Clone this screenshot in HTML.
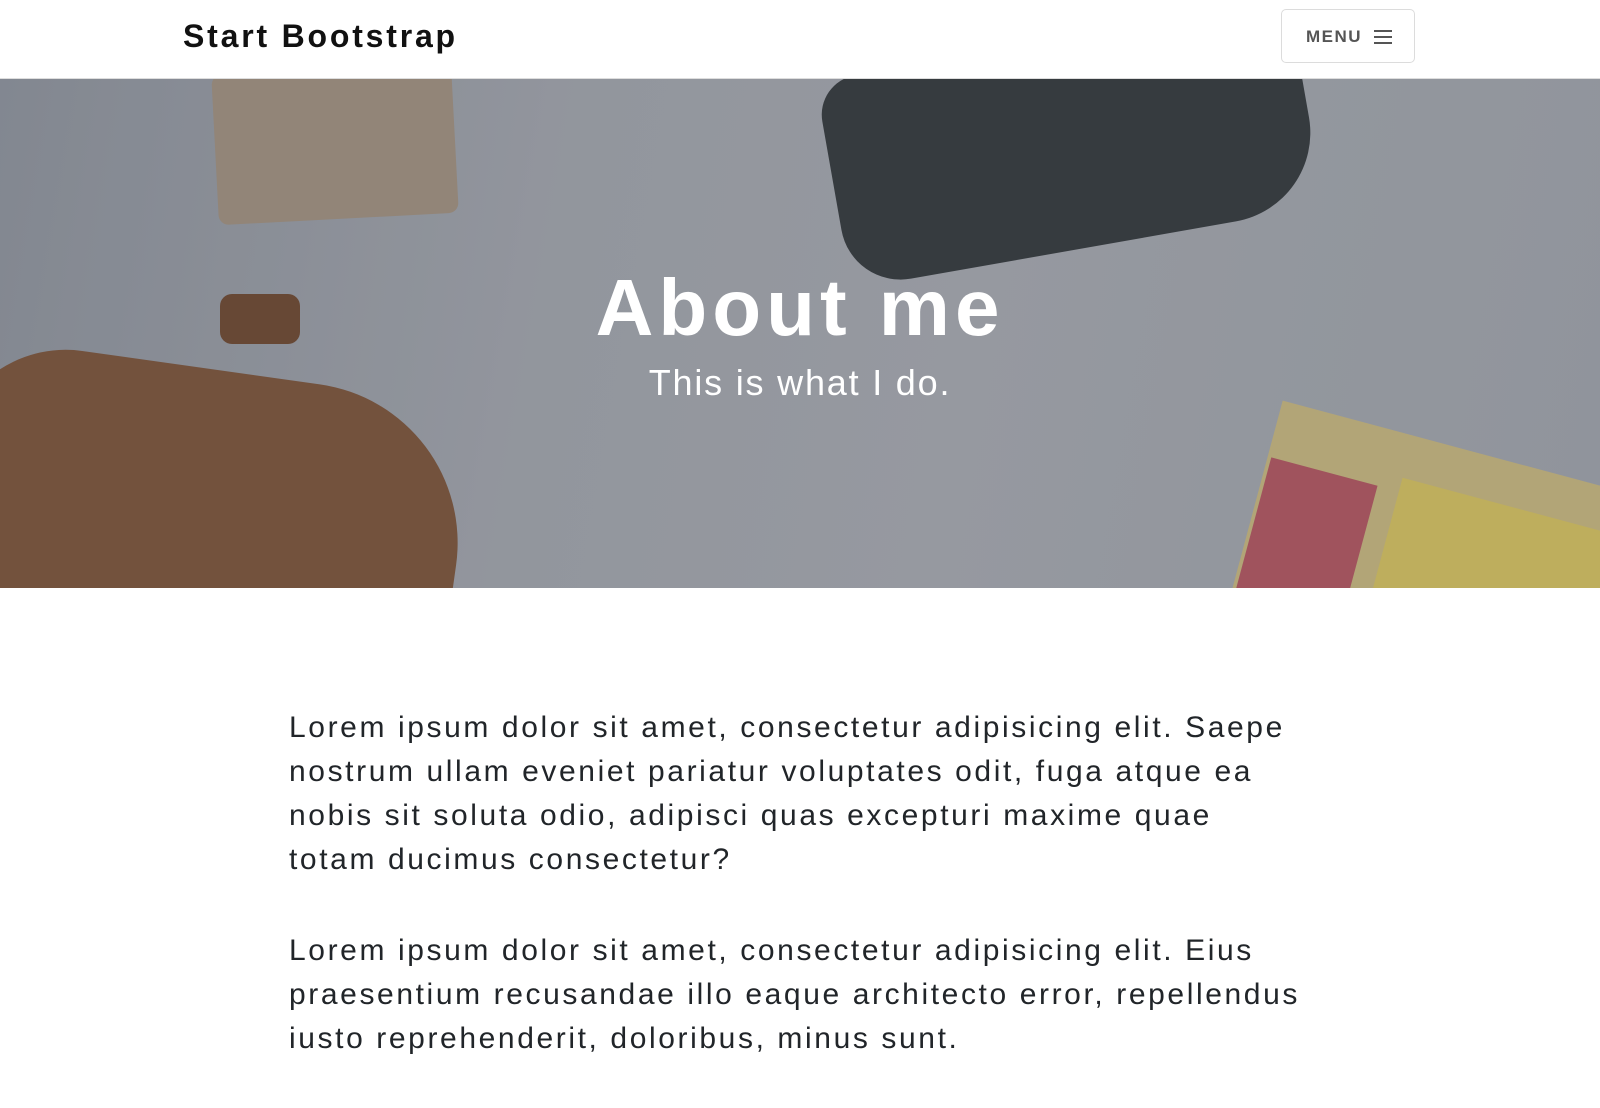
<!DOCTYPE html>
<html><head><meta charset="utf-8"><style>
*{margin:0;padding:0;box-sizing:border-box}
body{width:1600px;height:1000px;overflow:hidden;background:#fff;font-family:"Liberation Sans",sans-serif;color:#212529}
nav{position:absolute;top:0;left:0;width:1600px;height:79px;background:#fff;border-bottom:1px solid #ddd}
.brand{position:absolute;left:183px;top:18px;font-weight:bold;font-size:32px;letter-spacing:2.8px;color:#111}
.menu{position:absolute;left:1281px;top:9px;width:134px;height:54px;border:1px solid #dcdcdc;border-radius:5px;font-weight:bold;font-size:17px;letter-spacing:1.5px;color:#555;padding:17px 0 0 24px}
.menu i{position:absolute;left:92px;top:20px;width:18px;height:2px;background:#555;box-shadow:0 6px 0 #555,0 12px 0 #555}
.hero{position:absolute;top:79px;left:0;width:1600px;height:509px;overflow:hidden;
background:linear-gradient(100deg,#8d929b 0%,#a1a4ab 35%,#a5a8ae 60%,#9ea2a9 100%)}
.hero .s{position:absolute}
h1{position:absolute;top:262px;left:0;width:1600px;text-align:center;font-size:80px;font-weight:bold;color:#fff;letter-spacing:5px}
.sub{position:absolute;top:362px;left:0;width:1600px;text-align:center;font-size:36px;color:#fff;letter-spacing:1.8px}
.content{position:absolute;left:289px;top:706px;width:1015px;font-size:30px;line-height:44px;letter-spacing:2.6px;color:#212529}
.content p{margin-bottom:47px}
</style></head><body>
<nav><div class="brand">Start Bootstrap</div><div class="menu">MENU<i></i></div></nav>
<div class="hero">
<div class="s" style="left:215px;top:-10px;width:240px;height:150px;background:#a08f7c;border-radius:10px;transform:rotate(-3deg)"></div>
<div class="s" style="left:-60px;top:290px;width:520px;height:300px;background:#7a4f33;border-radius:120px 160px 0 0;transform:rotate(8deg)"></div>
<div class="s" style="left:220px;top:215px;width:80px;height:50px;background:#6b4329;border-radius:12px"></div>
<div class="s" style="left:830px;top:-40px;width:480px;height:210px;background:#2e3235;border-radius:40px 40px 90px 60px;transform:rotate(-10deg)"></div>
<div class="s" style="left:1250px;top:370px;width:400px;height:200px;background:#c9b77b;transform:rotate(15deg)"></div>
<div class="s" style="left:1250px;top:390px;width:110px;height:150px;background:#b2505b;transform:rotate(15deg)"></div>
<div class="s" style="left:1380px;top:430px;width:260px;height:140px;background:#d7c25a;transform:rotate(15deg)"></div>
<div class="s" style="left:0;top:0;width:1600px;height:509px;background:rgba(90,95,105,0.2)"></div>
</div>
<h1>About me</h1>
<div class="sub">This is what I do.</div>
<div class="content">
<p>Lorem ipsum dolor sit amet, consectetur adipisicing elit. Saepe nostrum ullam eveniet pariatur voluptates odit, fuga atque ea nobis sit soluta odio, adipisci quas excepturi maxime quae totam ducimus consectetur?</p>
<p>Lorem ipsum dolor sit amet, consectetur adipisicing elit. Eius praesentium recusandae illo eaque architecto error, repellendus iusto reprehenderit, doloribus, minus sunt.</p>
</div>
</body></html>
